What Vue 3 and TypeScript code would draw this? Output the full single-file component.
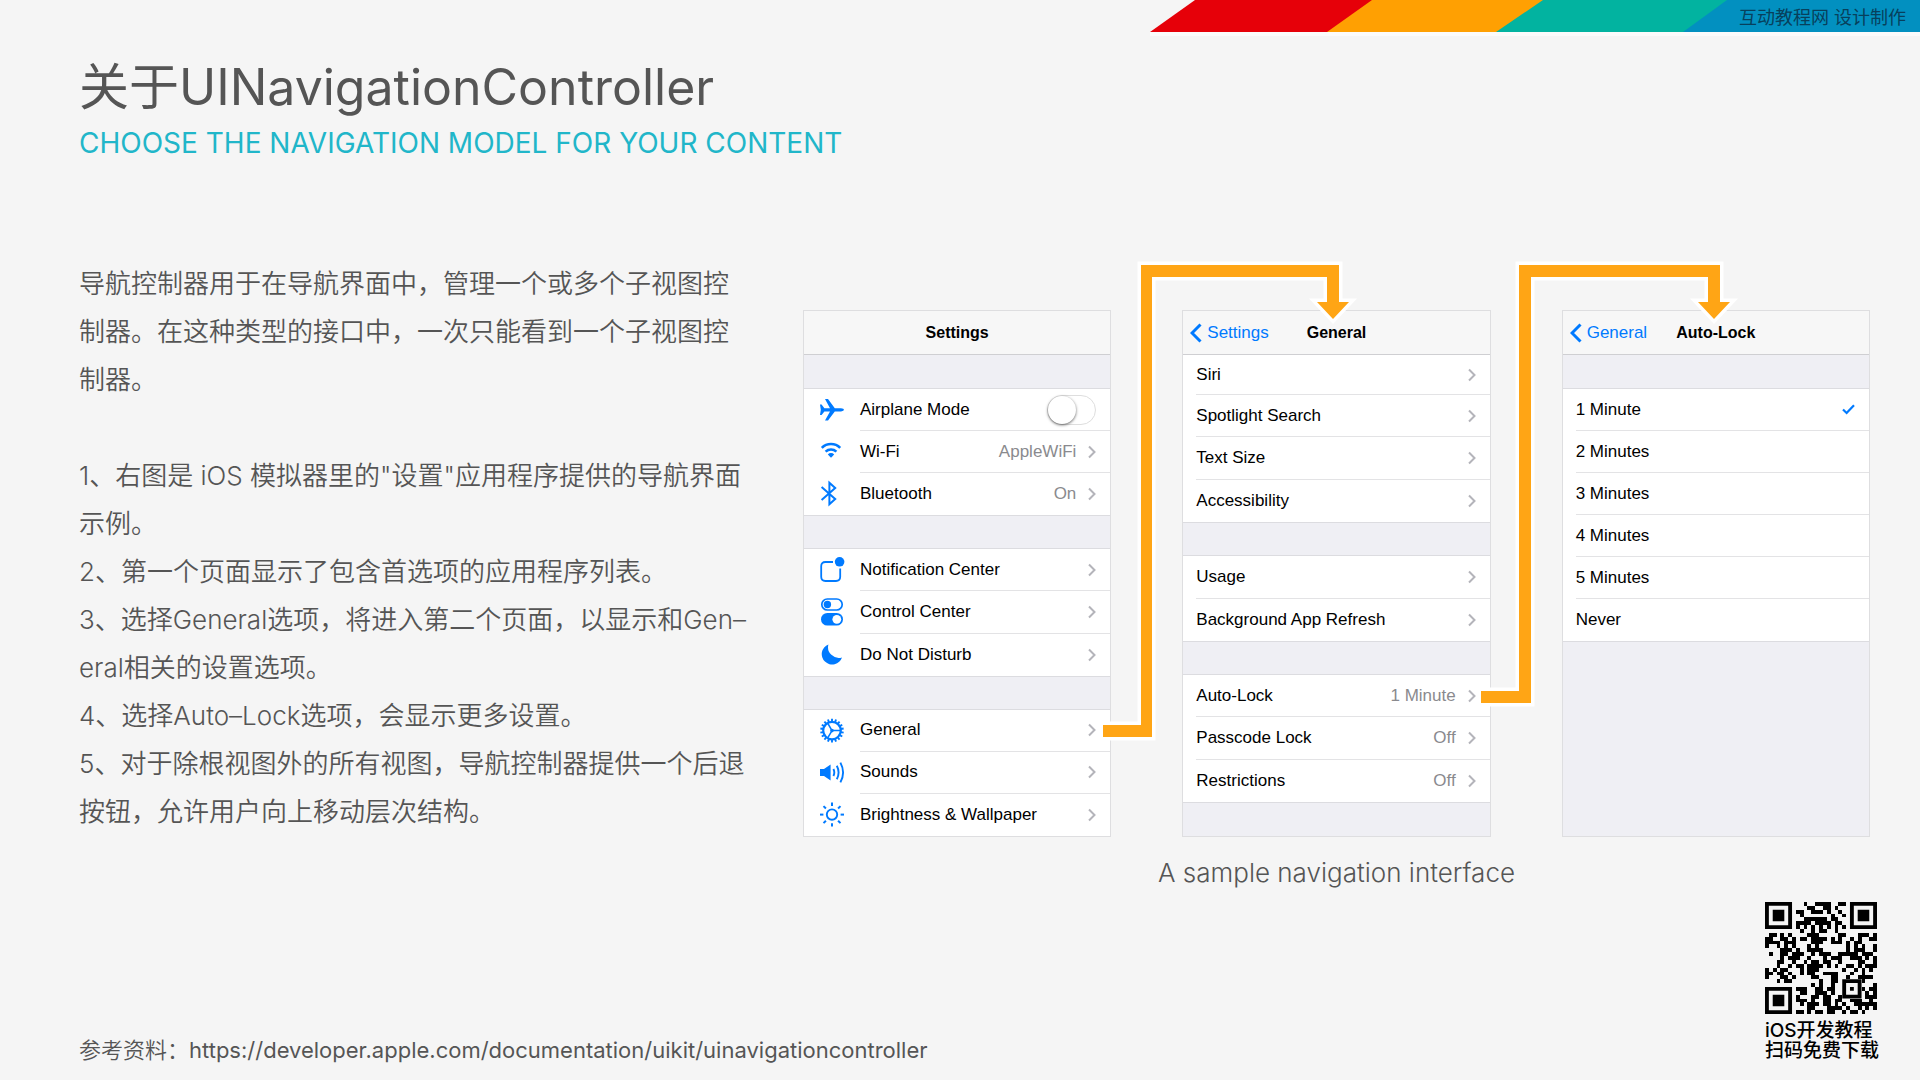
<script setup lang="ts">
import { ref } from 'vue'

interface Row {
  label: string
  icon?: string
  value?: string
  toggle?: boolean
}

const intro: string[] = [
  '导航控制器用于在导航界面中，管理一个或多个子视图控',
  '制器。在这种类型的接口中，一次只能看到一个子视图控',
  '制器。',
]

const notes: string[][] = [
  ['1、右图是 iOS 模拟器里的"设置"应用程序提供的导航界面', '示例。'],
  ['2、第一个页面显示了包含首选项的应用程序列表。'],
  ['3、选择General选项，将进入第二个页面，以显示和Gen–', 'eral相关的设置选项。'],
  ['4、选择Auto–Lock选项，会显示更多设置。'],
  ['5、对于除根视图外的所有视图，导航控制器提供一个后退', '按钮，允许用户向上移动层次结构。'],
]

const settings: Row[][] = [
  [
    { label: 'Airplane Mode', icon: 'plane', toggle: true },
    { label: 'Wi-Fi', icon: 'wifi', value: 'AppleWiFi' },
    { label: 'Bluetooth', icon: 'bluetooth', value: 'On' },
  ],
  [
    { label: 'Notification Center', icon: 'notification' },
    { label: 'Control Center', icon: 'control' },
    { label: 'Do Not Disturb', icon: 'moon' },
  ],
  [
    { label: 'General', icon: 'gear' },
    { label: 'Sounds', icon: 'sound' },
    { label: 'Brightness & Wallpaper', icon: 'sun' },
  ],
]

const general: Row[][] = [
  [{ label: 'Siri' }, { label: 'Spotlight Search' }, { label: 'Text Size' }, { label: 'Accessibility' }],
  [{ label: 'Usage' }, { label: 'Background App Refresh' }],
  [
    { label: 'Auto-Lock', value: '1 Minute' },
    { label: 'Passcode Lock', value: 'Off' },
    { label: 'Restrictions', value: 'Off' },
  ],
]

const durations: string[] = ['1 Minute', '2 Minutes', '3 Minutes', '4 Minutes', '5 Minutes', 'Never']
const selected = ref('1 Minute')
const airplane = ref(false)

const spokes: number[] = [0, 45, 90, 135, 180, 225, 270, 315]
const teeth: number[] = Array.from({ length: 18 }, (_, i) => i * 20)

// Data modules of the 29 x 29 code; finder and alignment squares are drawn separately.
const qrSize = 29
function isReserved(x: number, y: number): boolean {
  const finder = (x < 8 && y < 8) || (x > 20 && y < 8) || (x < 8 && y > 20)
  const alignment = x > 19 && x < 25 && y > 19 && y < 25
  return finder || alignment
}
function isDark(x: number, y: number, noise: number): boolean {
  if (x === 6) return y % 2 === 0
  if (y === 6) return x % 2 === 0
  return noise > 0.5
}
const modules: string = (() => {
  let d = ''
  let seed = 20177
  for (let y = 0; y < qrSize; y++) {
    for (let x = 0; x < qrSize; x++) {
      seed = (seed * 16807) % 2147483647
      if (!isReserved(x, y) && isDark(x, y, seed / 2147483647)) d += `M${x} ${y}h1v1h-1z`
    }
  }
  return d
})()
</script>

<template>
  <div class="slide">
    <div class="banner">
      <svg class="stripes" viewBox="0 0 770 36" preserveAspectRatio="none" aria-hidden="true">
        <path d="M0 32H770V36H0z" fill="#fbfbfb" />
        <path d="M45 0H240L190 32H0z" fill="#e60009" />
        <path d="M222 0H410L360 32H177z" fill="#ffa002" />
        <path d="M393 0H600L550 32H346z" fill="#02b3a0" />
        <path d="M577 0H770V32H533z" fill="#0290c0" />
      </svg>
      <span class="credit">互动教程网 设计制作</span>
    </div>

    <header class="heading">
      <h1>关于UINavigationController</h1>
      <p class="subtitle">CHOOSE THE NAVIGATION MODEL FOR YOUR CONTENT</p>
    </header>

    <main class="content">
      <section class="copy">
        <p><span v-for="line in intro" :key="line" class="line">{{ line }}</span></p>
        <div class="notes">
          <p v-for="(note, i) in notes" :key="i">
            <span v-for="line in note" :key="line" class="line">{{ line }}</span>
          </p>
        </div>
      </section>

      <figure class="figure">
        <div class="screens">
          <section class="phone">
            <div class="nav"><h2>Settings</h2></div>
            <template v-for="(group, g) in settings" :key="g">
              <div class="gap"></div>
              <component
                :is="row.toggle ? 'label' : 'button'"
                v-for="row in group"
                :key="row.label"
                class="row with-icon"
              >
                <span class="icon">
                  <svg width="26" height="28" viewBox="-1 -2 26 28" fill="none" stroke="#007aff" stroke-width="2" aria-hidden="true">
                    <path v-if="row.icon === 'plane'" fill="#007aff" stroke="none" d="M0 6.5H1.6L4.4 10.2H10L5 1H8L14.8 10.2H21Q24 10.6 24 11.8Q24 13 21 13.4H14.8L8 22.6H5L10 13.4H4.4L1.6 17H0L.8 11.8z" />
                    <g v-else-if="row.icon === 'wifi'">
                      <path d="M1.8 7.8A13 13 0 0 1 20.2 7.8M5.6 11.6A8 8 0 0 1 16.4 11.6" stroke-width="2.6" />
                      <path d="M7.8 14.4A4.6 4.6 0 0 1 14.2 14.4L11 17.8z" fill="#007aff" stroke="none" />
                    </g>
                    <path v-else-if="row.icon === 'bluetooth'" d="M1.6 5L15.2 17L9.4 22.2V.8L15.2 6L1.6 18" stroke-width="2" />
                    <g v-else-if="row.icon === 'notification'">
                      <path d="M13 4H5.4Q1.2 4 1.2 8.2V18.8Q1.2 23 5.4 23H16Q20.2 23 20.2 18.8V10.6" stroke-width="1.8" />
                      <circle cx="19.6" cy="3.8" r="4.8" fill="#007aff" stroke="none" />
                    </g>
                    <g v-else-if="row.icon === 'control'">
                      <rect x="1.8" y="-1" width="20.4" height="11" rx="5.5" stroke-width="1.7" />
                      <circle cx="7.4" cy="4.5" r="3.7" fill="#007aff" stroke="none" />
                      <rect x="1" y="13" width="22" height="12.6" rx="6.3" fill="#007aff" stroke="none" />
                      <circle cx="16.8" cy="19.3" r="4.4" fill="#fff" stroke="none" />
                    </g>
                    <path v-else-if="row.icon === 'moon'" fill="#007aff" stroke="none" d="M8.4 1.4A10.4 10.4 0 1 0 22 14.4A10.8 10.8 0 0 1 8.4 1.4z" />
                    <g v-else-if="row.icon === 'gear'">
                      <circle cx="12" cy="11.6" r="8.8" stroke-width="2.2" />
                      <path v-for="a in teeth" :key="a" d="M12 -.2V2.6" stroke-width="1.9" :transform="`rotate(${a} 12 11.6)`" />
                      <path d="M12 11.6L7.6 4M12 11.6L7.6 19.2M12 11.6H20.8" stroke-width="1.5" />
                      <circle cx="12" cy="11.6" r="1.8" fill="#007aff" stroke="none" />
                    </g>
                    <g v-else-if="row.icon === 'sound'">
                      <path d="M0 8H4L10.6 3.6V19.4L4 15H0z" fill="#007aff" stroke="none" />
                      <path d="M13.4 8Q15.2 11.5 13.4 15M16.8 4.8Q20.4 11.5 16.8 18.2M20.4 1.6Q25.8 11.5 20.4 21.4" stroke-width="1.9" />
                    </g>
                    <g v-else>
                      <circle cx="12" cy="11.6" r="5.2" stroke-width="1.9" />
                      <path v-for="a in spokes" :key="a" d="M12 -.4V3" stroke-width="2" :transform="`rotate(${a} 12 11.6)`" />
                    </g>
                  </svg>
                </span>
                <span class="body">
                  <span class="label">{{ row.label }}</span>
                  <input v-if="row.toggle" v-model="airplane" class="switch" type="checkbox" />
                  <template v-else>
                    <span class="value">{{ row.value }}</span>
                    <svg class="chevron" width="8" height="14" viewBox="0 0 8 14" aria-hidden="true"><path d="M1 1.5L6.5 7L1 12.5" /></svg>
                  </template>
                </span>
              </component>
            </template>
          </section>

          <section class="phone">
            <div class="nav">
              <button class="back">
                <svg width="12" height="20" viewBox="0 0 12 20" aria-hidden="true"><path d="M10.5 1.5L2 10L10.5 18.5" /></svg>
                Settings
              </button>
              <h2>General</h2>
            </div>
            <template v-for="(group, g) in general" :key="g">
              <div v-if="g > 0" class="gap"></div>
              <button v-for="row in group" :key="row.label" class="row" :class="{ clipped: row.label === 'Siri' }">
                <span class="body">
                  <span class="label">{{ row.label }}</span>
                  <span class="value">{{ row.value }}</span>
                  <svg class="chevron" width="8" height="14" viewBox="0 0 8 14" aria-hidden="true"><path d="M1 1.5L6.5 7L1 12.5" /></svg>
                </span>
              </button>
            </template>
            <div class="gap last"></div>
          </section>

          <section class="phone">
            <div class="nav">
              <button class="back">
                <svg width="12" height="20" viewBox="0 0 12 20" aria-hidden="true"><path d="M10.5 1.5L2 10L10.5 18.5" /></svg>
                General
              </button>
              <h2>Auto-Lock</h2>
            </div>
            <div class="gap"></div>
            <label v-for="d in durations" :key="d" class="row fixed">
              <span class="body">
                <span class="label">{{ d }}</span>
                <input v-model="selected" class="choice" type="radio" name="auto-lock" :value="d" />
                <svg v-if="selected === d" width="13" height="11" viewBox="0 0 13 11" aria-hidden="true">
                  <path d="M1 5.5L4.6 9L12 1.2" fill="none" stroke="#007aff" stroke-width="2.2" />
                </svg>
              </span>
            </label>
            <div class="gap fill"></div>
          </section>

          <svg class="arrows" viewBox="0 0 1067 577" preserveAspectRatio="none" aria-hidden="true">
            <path d="M300 465H338V5H536V42H546L530 59L514 42H524V17H349V477H300z" />
            <path d="M678 431H716V5H917V42H927L911 59L895 42H905V17H728V443H678z" />
          </svg>
        </div>
        <figcaption>A sample navigation interface</figcaption>
      </figure>
    </main>

    <footer class="footer">
      <p class="source">参考资料：<a href="https://developer.apple.com/documentation/uikit/uinavigationcontroller">https://developer.apple.com/documentation/uikit/uinavigationcontroller</a></p>
      <div class="download">
        <svg viewBox="0 0 29 29" width="112" height="112" role="img" aria-label="QR code">
          <path d="M0 0h7v7h-7zM22 0h7v7h-7zM0 22h7v7h-7zM20 20h5v5h-5z" />
          <path d="M1 1h5v5h-5zM23 1h5v5h-5zM1 23h5v5h-5zM21 21h3v3h-3z" fill="#f5f5f5" />
          <path d="M2 2h3v3h-3zM24 2h3v3h-3zM2 24h3v3h-3zM22 22h1v1h-1z" />
          <path :d="modules" shape-rendering="crispEdges" />
        </svg>
        <p>iOS开发教程<br />扫码免费下载</p>
      </div>
    </footer>
  </div>
</template>

<style>
body {
  background: #f5f5f5;
}
</style>

<style scoped>
.slide {
  display: flex;
  flex-direction: column;
  box-sizing: border-box;
  min-height: 100vh;
  color: #555;
  background: #f5f5f5;
  font-family: Inter, 'Noto Sans CJK SC', sans-serif;
  font-weight: 350;
}

h1,
h2,
p,
figure {
  margin: 0;
}

.banner {
  position: relative;
  display: flex;
  align-items: center;
  align-self: flex-end;
  justify-content: flex-end;
  box-sizing: border-box;
  width: 770px;
  height: 32px;
  padding-right: 14px;
}

.stripes {
  position: absolute;
  top: 0;
  left: 0;
  width: 100%;
  height: 36px;
}

.credit {
  position: relative;
  color: #07405c;
  font-size: 18px;
  font-weight: 400;
}

.heading {
  padding: 23px 79px 0;
}

h1 {
  font-size: 50px;
  font-weight: 400;
  line-height: 64px;
}

.subtitle {
  margin-top: 6px;
  color: #21b6c9;
  font-size: 28px;
  font-weight: 400;
  line-height: 36px;
}

.content {
  display: grid;
  grid-template-columns: 679fr 1067fr;
  gap: 45px;
  padding: 99px 50px 0 79px;
}

.copy {
  font-size: 26px;
  line-height: 48px;
}

.line {
  display: block;
  white-space: nowrap;
}

.notes {
  margin-top: 48px;
}

.screens {
  position: relative;
  display: grid;
  grid-template-columns: repeat(3, 1fr);
  gap: 71px;
  padding-top: 50px;
}

.arrows {
  position: absolute;
  inset: 0;
  width: 100%;
  height: 100%;
  overflow: visible;
  pointer-events: none;
}

.arrows path {
  fill: #ffa515;
  stroke: #fff;
  stroke-width: 7px;
  paint-order: stroke;
}

.phone {
  display: flex;
  flex-direction: column;
  box-sizing: border-box;
  min-height: 527px;
  border: 1px solid #dedee0;
  background: #fff;
  color: #000;
  font-family: 'Liberation Sans', sans-serif;
  font-size: 17px;
  font-weight: 400;
}

.nav {
  position: relative;
  display: flex;
  align-items: center;
  justify-content: center;
  box-sizing: border-box;
  height: 44px;
  border-bottom: 1px solid #cfcfd2;
  background: #f7f7f7;
}

h2 {
  font-size: 16px;
  font-weight: 700;
}

button {
  padding: 0;
  border: 0;
  background: none;
  color: inherit;
  font: inherit;
  text-align: left;
}

.back {
  position: absolute;
  left: 7px;
  display: flex;
  align-items: center;
  gap: 5px;
  color: #007aff;
}

.back path {
  fill: none;
  stroke: #007aff;
  stroke-width: 3px;
}

.gap {
  box-sizing: border-box;
  height: 34px;
  border-bottom: 1px solid #dcdce0;
  background: #efeff4;
}

.row + .gap {
  border-top: 1px solid #dcdce0;
}

.gap.last {
  border-bottom: 0;
}

.gap.fill {
  flex: 1;
  border-bottom: 0;
}

.row {
  display: flex;
  flex: 1 0 42px;
  box-sizing: border-box;
  padding-left: 13px;
}

.row.with-icon {
  padding-left: 0;
}

.row.fixed,
.row.clipped {
  flex: none;
  height: 42px;
}

.row.clipped {
  height: 40px;
}

.icon {
  display: flex;
  align-items: center;
  box-sizing: border-box;
  width: 56px;
  padding-left: 15px;
}

.body {
  display: flex;
  flex: 1;
  align-items: center;
  padding-right: 14px;
  border-bottom: 1px solid #e3e3e5;
}

.row:has(+ .gap) .body,
.row:last-child .body {
  border-bottom: 0;
}

.label {
  flex: 1;
  white-space: nowrap;
}

.value {
  margin-right: 12px;
  color: #8a8a8e;
}

.chevron path {
  fill: none;
  stroke: #b4b4ba;
  stroke-width: 2px;
}

.switch {
  position: relative;
  width: 49px;
  height: 30px;
  margin: 0;
  border: 1px solid #dedede;
  border-radius: 15px;
  appearance: none;
  background: #fff;
}

.switch::before {
  position: absolute;
  top: 0;
  left: 0;
  width: 28px;
  height: 28px;
  border-radius: 50%;
  background: #fff;
  box-shadow: 0 1px 3px rgba(0, 0, 0, 0.6);
  content: '';
}

.switch:checked {
  background: #4cd964;
}

.switch:checked::before {
  left: 19px;
}

.choice {
  width: 0;
  height: 0;
  margin: 0;
  appearance: none;
}

figcaption {
  margin-top: 20px;
  font-size: 26px;
  line-height: 32px;
  text-align: center;
}

.footer {
  display: flex;
  align-items: flex-end;
  justify-content: space-between;
  margin-top: auto;
  padding: 0 41px 19px 79px;
}

.source {
  font-size: 22px;
  line-height: 22px;
}

.source a {
  color: inherit;
  font-weight: 400;
  text-decoration: none;
}

.download {
  display: flex;
  flex-direction: column;
  align-items: flex-start;
  gap: 7px;
  color: #000;
  font-size: 19px;
  font-weight: 500;
  line-height: 20px;
  white-space: nowrap;
}
</style>
